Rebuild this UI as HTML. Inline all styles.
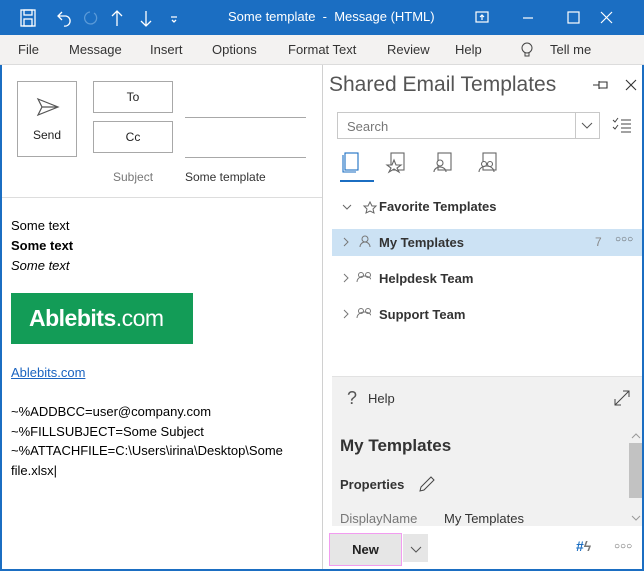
<!DOCTYPE html>
<html><head><style>
*{margin:0;padding:0;box-sizing:border-box}
html,body{width:644px;height:571px;overflow:hidden}
body{font-family:"Liberation Sans",sans-serif;background:#fff;position:relative;font-size:13px;color:#222}
.a{position:absolute}
.title{left:0;top:0;width:644px;height:35px;background:#1b6ec2}
.tabs{left:0;top:35px;width:644px;height:30px;background:#f3f2f1;border-bottom:1px solid #dcdcdc}
.tabs span{position:absolute;top:7px;font-size:13px;color:#333}
.box{border:1px solid #a8a8a8;background:#fff;text-align:center}
.pane{left:322px;top:65px;width:322px;height:506px;border-left:1px solid #d0d0d0}
</style></head><body>
<div class="a title">
<svg class="a" style="left:18px;top:8px" width="170" height="20" fill="none" stroke="#fff" stroke-width="1.3">
<rect x="3" y="2" width="14" height="16"/><rect x="6" y="11" width="8" height="7"/><rect x="6" y="2" width="8" height="5"/>
<path d="M44 4 L40 8 L44 12 M40 8 H48 A5 5 0 0 1 46 18"/>
<path d="M76 5 A6 6 0 1 1 72 4" stroke="#5a9ad8"/>
<path d="M99 3 V18 M94 8 L99 3 L104 8"/>
<path d="M128 3 V18 M123 13 L128 18 L133 13"/>
<path d="M153 9 H159 M154 12 L156 14 L158 12"/>
</svg>
<div class="a" style="left:228px;top:9px;color:#fff;font-size:13px">Some template&nbsp; - &nbsp;Message (HTML)</div>
<svg class="a" style="left:470px;top:8px" width="170" height="20" fill="none" stroke="#fff" stroke-width="1.2">
<rect x="6" y="4" width="12" height="10"/><path d="M12 12 V7 M10 9 L12 7 L14 9"/>
<path d="M53 10 H63"/><rect x="98" y="4" width="11" height="11"/><path d="M131 4 L142 15 M142 4 L131 15"/>
</svg>
</div>
<div class="a tabs">
<span style="left:18px">File</span><span style="left:69px">Message</span><span style="left:150px">Insert</span><span style="left:212px">Options</span><span style="left:288px">Format Text</span><span style="left:387px">Review</span><span style="left:455px">Help</span>
<svg class="a" style="left:520px;top:6px" width="14" height="18" fill="none" stroke="#444"><circle cx="7" cy="7" r="5"/><path d="M5 12 V15 H9 V12"/></svg>
<span style="left:550px">Tell me</span>
</div>
<div class="a" style="left:0;top:65px;width:2px;height:506px;background:#1b6ec2"></div>
<div class="a box" style="left:17px;top:81px;width:60px;height:76px"><svg class="a" style="left:18px;top:15px" width="24" height="20" fill="none" stroke="#555" stroke-width="1.2"><path d="M2 2 L22 10 L2 18 L6 10 Z M6 10 H22"/></svg><div class="a" style="left:0;top:46px;width:58px;font-size:12px">Send</div></div>
<div class="a box" style="left:93px;top:81px;width:80px;height:32px;line-height:30px;font-size:12px">To</div>
<div class="a box" style="left:93px;top:121px;width:80px;height:32px;line-height:30px;font-size:12px">Cc</div>
<div class="a" style="left:185px;top:117px;width:121px;height:1px;background:#a8a8a8"></div>
<div class="a" style="left:185px;top:157px;width:121px;height:1px;background:#a8a8a8"></div>
<div class="a" style="left:113px;top:170px;font-size:12px;color:#777">Subject</div>
<div class="a" style="left:185px;top:170px;font-size:12px;color:#333">Some template</div>
<div class="a" style="left:2px;top:197px;width:320px;height:1px;background:#ddd"></div>
<div class="a" style="left:11px;top:216px;font-size:13px;color:#000;line-height:20px">Some text<br><b>Some text</b><br><i>Some text</i></div>
<div class="a" style="left:11px;top:293px;width:182px;height:51px;background:#139c57;color:#fff;font-size:23px;line-height:51px;padding-left:18px;letter-spacing:-0.5px"><b>Ablebits</b>.com</div>
<div class="a" style="left:11px;top:365px;color:#1a63c0;text-decoration:underline;font-size:13px">Ablebits.com</div>
<div class="a" style="left:11px;top:402px;font-size:13px;color:#000;line-height:19.5px">~%ADDBCC=user@company.com<br>~%FILLSUBJECT=Some Subject<br>~%ATTACHFILE=C:\Users\irina\Desktop\Some<br>file.xlsx|</div>
<div class="a pane">
<div class="a" style="left:6px;top:8px;font-size:21px;color:#555">Shared Email Templates</div>
<svg class="a" style="left:268px;top:12px" width="50" height="16" fill="none" stroke="#333" stroke-width="1.1"><path d="M2 8 H8 M8 4 V12 M8 5 H16 V11 H8"/><path d="M35 3 L45 13 M45 3 L35 13"/></svg>
<div class="a" style="left:14px;top:47px;width:263px;height:27px;border:1px solid #c8c8c8"><span class="a" style="left:9px;top:6px;color:#777;font-size:13px">Search</span><div class="a" style="left:237px;top:0;width:1px;height:25px;background:#c8c8c8"></div><svg class="a" style="left:243px;top:9px" width="12" height="8" fill="none" stroke="#555"><path d="M1 1 L6 6 L11 1"/></svg></div>
<svg class="a" style="left:289px;top:52px" width="20" height="16" fill="none" stroke="#444"><path d="M1 3 L3 5 L6 1 M1 10 L3 12 L6 8 M9 3 H19 M9 7 H19 M9 11 H19 M9 15 H19"/></svg>
<svg class="a" style="left:16px;top:86px" width="170" height="32" fill="none" stroke="#666" stroke-width="1.1">
<rect x="6" y="2" width="13" height="17" stroke="#1b6ec2"/><path d="M4 4 V21 H17" stroke="#1b6ec2"/>
<rect x="52" y="2" width="13" height="17"/><path d="M55 9 L57 14 H62 L58 17 L60 21 L55 18 L50 21 L52 17 L48 14 H53 Z" fill="#fff"/>
<rect x="99" y="2" width="13" height="17"/><circle cx="101" cy="12" r="3" fill="#fff"/><path d="M95 21 A6 5 0 0 1 107 21"/>
<rect x="144" y="2" width="13" height="17"/><circle cx="145" cy="13" r="2.5" fill="#fff"/><circle cx="151" cy="13" r="2.5" fill="#fff"/><path d="M140 21 A5 4 0 0 1 155 21"/>
</svg>
<div class="a" style="left:17px;top:115px;width:34px;height:2px;background:#1b6ec2"></div>
<svg class="a" style="left:18px;top:136px" width="40" height="14" fill="none" stroke="#666"><path d="M2 4 L6 8 L10 4"/><path d="M29 1 L31 5 H35 L32 8 L33 12 L29 10 L25 12 L26 8 L23 5 H27 Z"/></svg>
<div class="a" style="left:56px;top:134px;font-weight:bold;font-size:13px;color:#333">Favorite Templates</div>
<div class="a" style="left:9px;top:164px;width:313px;height:27px;background:#cce2f4"></div>
<div class="a" style="left:56px;top:170px;font-weight:bold;font-size:13px;color:#333">My Templates</div>
<div class="a" style="left:272px;top:170px;font-size:12px;color:#888">7</div>
<div class="a" style="left:292px;top:169px;font-size:10px;color:#555;letter-spacing:0px">○○○</div>
<div class="a" style="left:56px;top:206px;font-weight:bold;font-size:13px;color:#333">Helpdesk Team</div>
<div class="a" style="left:56px;top:242px;font-weight:bold;font-size:13px;color:#333">Support Team</div>
<svg class="a" style="left:18px;top:170px" width="30" height="90" fill="none" stroke="#777"><path d="M3 3 L7 7 L3 11 M3 39 L7 43 L3 47 M3 75 L7 79 L3 83"/><circle cx="24" cy="4" r="3"/><path d="M19 12 A5 5 0 0 1 29 12"/><circle cx="20" cy="40" r="2.5"/><circle cx="27" cy="40" r="2.5"/><path d="M16 47 A5 4 0 0 1 31 47"/><circle cx="20" cy="76" r="2.5"/><circle cx="27" cy="76" r="2.5"/><path d="M16 83 A5 4 0 0 1 31 83"/></svg>
<div class="a" style="left:9px;top:311px;width:313px;height:150px;background:#f1f1f1;border-top:1px solid #e2e2e2"></div>
<div class="a" style="left:24px;top:323px;font-size:18px;color:#555">?</div>
<div class="a" style="left:45px;top:326px;font-size:13px;color:#333">Help</div>
<svg class="a" style="left:290px;top:324px" width="18" height="18" fill="none" stroke="#444"><path d="M2 16 L16 2 M10 2 H16 V8 M2 10 V16 H8"/></svg>
<div class="a" style="left:17px;top:371px;font-size:17px;font-weight:bold;color:#333">My Templates</div>
<div class="a" style="left:17px;top:412px;font-size:13px;font-weight:bold;color:#333">Properties</div>
<svg class="a" style="left:95px;top:410px" width="18" height="18" fill="none" stroke="#444"><path d="M2 16 L3 12 L13 2 L16 5 L6 15 Z"/></svg>
<div class="a" style="left:17px;top:446px;font-size:13px;color:#777">DisplayName</div>
<div class="a" style="left:121px;top:446px;font-size:13px;color:#333">My Templates</div>
<div class="a" style="left:305px;top:363px;width:15px;height:98px;background:#f1f1f1"><svg class="a" style="left:3px;top:4px" width="10" height="90" fill="none" stroke="#999"><path d="M1 6 L5 2 L9 6 M1 84 L5 88 L9 84"/></svg></div>
<div class="a" style="left:306px;top:378px;width:13px;height:55px;background:#c2c2c2"></div>
<div class="a" style="left:6px;top:468px;width:73px;height:33px;background:#e6e6e6;border:1px solid #f29cf0;text-align:center;line-height:31px;font-weight:bold;font-size:13px;color:#222">New</div>
<div class="a" style="left:80px;top:469px;width:25px;height:28px;background:#e6e6e6"><svg class="a" style="left:7px;top:12px" width="12" height="8" fill="none" stroke="#555"><path d="M1 1 L6 6 L11 1"/></svg></div>
<div class="a" style="left:253px;top:473px;font-size:14px;font-weight:bold;color:#1b6ec2">#<span style="color:#777">ϟ</span></div>
<div class="a" style="left:291px;top:476px;font-size:10px;color:#555">○○○</div>
</div>
<div class="a" style="left:0;top:569px;width:644px;height:2px;background:#1b6ec2"></div>
<div class="a" style="left:642px;top:65px;width:2px;height:506px;background:#1b6ec2"></div>
</body></html>
